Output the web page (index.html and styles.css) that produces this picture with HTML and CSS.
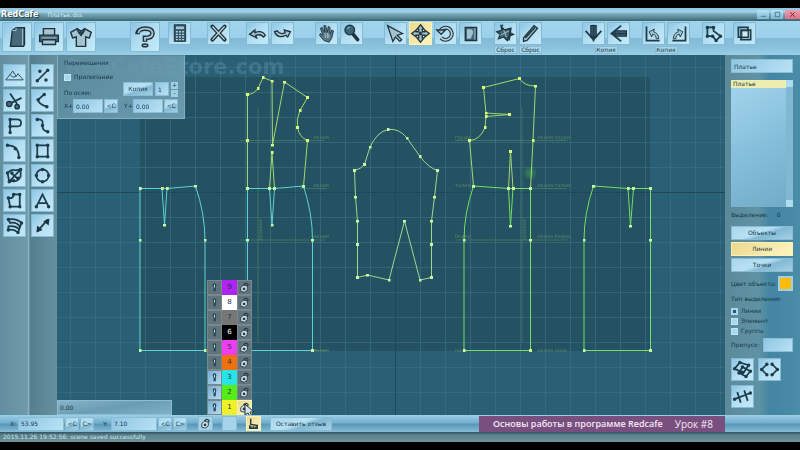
FILE: index.html
```html
<!DOCTYPE html>
<html lang="ru">
<head>
  <meta charset="UTF-8" />
  <meta name="viewport" content="width=device-width, initial-scale=1.0"/>
  <title>RedCafe - Платье.dss</title>
  <link rel="stylesheet" href="styles.css">
</head>
<body>
  <!-- shared symbols -->
  <svg class="defs" width="0" height="0" aria-hidden="true">
    <symbol id="bulb" viewBox="0 0 14 14">
      <path d="M7 2.500a2 2 0 0 1 2 2c0 1-.6 1.500-.6 2.500v4H6V7C6 6 5 5.500 5 4.500a2 2 0 0 1 2-2z" fill="#24465a"/>
      <path d="M7 4v3" stroke="#cfe6ee" stroke-width="1"/>
    </symbol>
    <symbol id="lock" viewBox="0 0 14 14">
      <path d="M3 7l3-2.500 4 1v4l-3 2.500-4-1z" fill="#dbe9ee" stroke="#253c48" stroke-width="1"/>
      <circle cx="6.500" cy="8.500" r="1.500" fill="#253c48"/>
      <path d="M6 4.500C7 2 10 2 11 4l-1 2" fill="none" stroke="#253c48" stroke-width="1.200"/>
    </symbol>
  </svg>

  <header class="titlebar">
    <h1>RedCafe</h1>
    <span class="filename">Платье.dss</span>
    <div class="window-buttons">
      <button aria-label="Свернуть"><svg viewBox="0 0 10 10"><path d="M2 7h6"/></svg></button>
      <button aria-label="Развернуть"><svg viewBox="0 0 10 10"><path d="M2.500 2.500h5v5h-5z"/></svg></button>
      <button class="close" aria-label="Закрыть"><svg viewBox="0 0 10 10"><path d="M2.500 2.500l5 5M7.500 2.500l-5 5"/></svg></button>
    </div>
  </header>

  <nav class="toolbar">
    <div class="group">
      <button class="tool big" aria-label="Новый"><svg viewBox="0 0 30 30"><path class="metal" d="M10 8l4-3h9v18l-1 2H8z"/><path class="thin" d="M10 8l4 0 0-3M21 6v18"/></svg></button>
      <button class="tool big" aria-label="Печать"><svg viewBox="0 0 30 30"><path class="pale" d="M9 6h12v8H9z"/><path class="metal" d="M5 13h20v7H5z"/><path class="pale" d="M8 18h14v5H8z"/><path class="thin" d="M7 16h16M11 9h8"/></svg></button>
      <button class="tool big" aria-label="Модель"><svg viewBox="0 0 30 30"><path class="pale" d="M11 6l4 3 4-3 7 4-2 6-4-1v10H10V15l-4 1-2-6z"/><path class="line" d="M15 9v5M11 7l3 5M19 7l-3 5"/><path class="thin" d="M12 15v9M18 15v9M7 12l3-2M23 12l-3-2"/></svg></button>
    </div>
    <div class="group sp-34">
      <button class="tool big" aria-label="Помощь"><svg viewBox="0 0 30 30"><path d="M7 12c0-4 4-6 8-6s8 1 8 5-4 5-8 5v4" fill="none" stroke="#20323c" stroke-width="5"/><path d="M8 11c0-3 3-5 7-5s8 1 8 5-4 5-8 5v3" fill="none" stroke="#a9c6d2" stroke-width="2"/><ellipse class="pale" cx="15" cy="24" rx="3" ry="1.500"/></svg></button>
    </div>
    <div class="group sp-8">
      <button class="tool" aria-label="Калькулятор"><svg viewBox="0 0 24 24"><path d="M6 2h13v19H6z" fill="#35586b" stroke="#172b36"/><path d="M8 4h9v3H8z" fill="#a5c9d8"/><path d="M8 10h9M8 13h9M8 16h9M8 19h9" stroke="#bcd9e5" stroke-width="1.600" stroke-dasharray="2 1.500"/></svg></button>
    </div>
    <div class="group sp-16">
      <button class="tool" aria-label="Удалить"><svg viewBox="0 0 24 24"><path d="M5 4l14 15M19 4L5 19" stroke="#20323c" stroke-width="4.500" stroke-linecap="round"/><path d="M5 4l14 15M19 4L5 19" stroke="#bcd3dc" stroke-width="1.500"/></svg></button>
    </div>
    <div class="group sp-16">
      <button class="tool" aria-label="Отменить"><svg viewBox="0 0 24 24"><path class="pale" d="M3 13l6-5v3c5-2 9-2 12 3l-2 2c-3-3-6-3-9-2l1 3z"/></svg></button>
      <button class="tool" aria-label="Вернуть"><svg viewBox="0 0 24 24"><path class="pale" d="M21 10l-7-2 1 3c-4 2-7 1-9-2l-3 1c2 6 7 7 13 4l2 2z"/></svg></button>
    </div>
    <div class="group sp-22">
      <button class="tool" aria-label="Рука"><svg viewBox="0 0 24 24"><path d="M9 20L4 14l1-2 3 2L5 6l2-1 3 6-1-8h2l2 8 1-7 2 1v8l2-5 2 1-2 8-3 5z" fill="#567784" stroke="#1d323d"/><path d="M10 11l1 6M13 11l0 6M15 12l-1 5" stroke="#c5dbe3" stroke-width=".8"/></svg></button>
      <button class="tool" aria-label="Лупа"><svg viewBox="0 0 24 24"><path class="heavy" d="M14 13l5 6"/><circle cx="10" cy="8" r="5.500" fill="#3d6575" stroke="#1d323d" stroke-width="1.500"/><path d="M7 7a3 3 0 0 1 3-2" class="thin"/></svg></button>
    </div>
    <div class="group sp-22">
      <button class="tool" aria-label="Выбор"><svg viewBox="0 0 24 24"><path class="pale" d="M3 3l17 9-6 2 5 5-2 2-5-5-3 5z"/></svg></button>
      <button class="tool on" aria-label="Перемещение"><svg viewBox="0 0 24 24"><path class="pale" d="M12 2l4 5h-2v3h3V8l5 4-5 4v-2h-3v3h2l-4 5-4-5h2v-3H7v2l-5-4 5-4v2h3V7H8z"/><circle cx="12" cy="12" r="2" fill="#253c48"/></svg></button>
      <button class="tool" aria-label="Поворот"><svg viewBox="0 0 24 24"><path d="M6 9a7 7 0 1 1 1 8" fill="none" stroke="#20323c" stroke-width="4.500"/><path d="M6 9a7 7 0 1 1 1 8" fill="none" stroke="#b5cfda" stroke-width="2"/><path class="pale" d="M2 8h10l-5 5z"/></svg></button>
      <button class="tool" aria-label="Отражение"><svg viewBox="0 0 24 24"><path class="metal" d="M6 5h13v15H6z"/><path d="M8 7h5c4 2 1 7-1 11H8z" fill="#9dc4d3"/><path class="thin" d="M17 6v13"/></svg></button>
    </div>
    <div class="group sp-12">
      <div class="stack">
        <button class="tool" aria-label="Центр"><svg viewBox="0 0 24 24"><path d="M7 4l4 4 7-2-1 5 4 2-5 2-2 5-4-4-6 2 2-5-4-3 6-2z" fill="#456572" stroke="#1d323d" stroke-width="1.500"/><path d="M6 14l10-5M10 8l3 8" class="thin"/><path class="line" d="M7 4l2-2M18 6l-2 14"/></svg></button>
        <button class="tiny">Сброс</button>
      </div>
      <div class="stack">
        <button class="tool" aria-label="Линейка"><svg viewBox="0 0 24 24"><path class="pale" d="M4 17L16 3l4 3L8 20l-4 1z"/><path class="line" d="M6 17L17 5"/></svg></button>
        <button class="tiny">Сброс</button>
      </div>
    </div>
    <div class="group sp-40">
      <div class="stack wide">
        <div class="group">
          <button class="tool" aria-label="Отразить вертикально"><svg viewBox="0 0 24 24"><path class="metal" d="M9 3h6v13H9z"/><path class="line" d="M3 9l9 10 9-10M12 2v19"/></svg></button>
          <button class="tool" aria-label="Отразить горизонтально"><svg viewBox="0 0 24 24"><path class="metal" d="M8 9h13v6H8z"/><path class="line" d="M15 3L4 12l11 9M3 12h18"/></svg></button>
        </div>
        <button class="tiny">Копия</button>
      </div>
    </div>
    <div class="group sp-12">
      <div class="stack wide">
        <div class="group">
          <button class="tool" aria-label="Повернуть влево"><svg viewBox="0 0 24 24"><path class="line" d="M4 4v16h15"/><path class="pale fine" d="M7 10l6-3-1 3c4 1 6 4 6 8h-3c0-3-1-5-4-5l-1 3z"/></svg></button>
          <button class="tool" aria-label="Повернуть вправо"><svg viewBox="0 0 24 24"><path class="line" d="M20 4v16H5"/><path class="pale fine" d="M17 10l-6-3 1 3c-4 1-6 4-6 8h3c0-3 1-5 4-5l1 3z"/></svg></button>
        </div>
        <button class="tiny">Копия</button>
      </div>
    </div>
    <div class="group sp-12">
      <button class="tool" aria-label="Контур"><svg viewBox="0 0 24 24"><path class="line" d="M5 5h7v4l8 6-5 5-4-5H5z"/><path class="dots" d="M5 5h0M12 5h0M20 15h0M15 20h0M5 15h0M11 15h0"/></svg></button>
    </div>
    <div class="group sp-8">
      <button class="tool" aria-label="Слои"><svg viewBox="0 0 24 24"><path d="M5 5h11v11H5zM8 8h11v11H8z" class="line"/><path d="M9 9h7v7H9z" fill="#cfe8f2" stroke="#1d323d"/></svg></button>
    </div>
  </nav>

  <main class="main">
    <aside class="tools">
      <button class="tool" aria-label="Рельеф"><svg viewBox="0 0 24 24"><path class="line fine" d="M2 17L10 7l4 6 2-3 6 7zM7 11l3 3 4-1"/></svg></button>
      <button class="tool" aria-label="Отрезок"><svg viewBox="0 0 24 24"><path class="line" d="M6 18L18 6"/><path class="dots" d="M6 18h0M18 6h0M9 7h0M16 17h0"/></svg></button>
      <button class="tool" aria-label="Ножницы"><svg viewBox="0 0 24 24"><path class="line" d="M7 4l8 12M20 9L8 15"/><circle class="metal" cx="6" cy="16" r="3"/><circle class="metal" cx="15" cy="19" r="2.500"/></svg></button>
      <button class="tool" aria-label="Дуга"><svg viewBox="0 0 24 24"><path class="line" d="M14 5l-7 6c0 4 4 6 10 8"/><path class="dots" d="M14 5h0M17 19h0M7 11h0"/></svg></button>
      <button class="tool" aria-label="Параллель"><svg viewBox="0 0 24 24"><path class="line" d="M7 20V5h8c6 0 6 8 0 8H7"/><path class="dots" d="M7 20h0M7 5h0M7 13h0"/></svg></button>
      <button class="tool" aria-label="Кривая"><svg viewBox="0 0 24 24"><path class="line" d="M6 5c8-1 6 5 6 8s2 5 6 6"/><path class="dots" d="M6 5h0M12 12h0M18 19h0"/></svg></button>
      <button class="tool" aria-label="Скругление"><svg viewBox="0 0 24 24"><path class="line" d="M4 6c9 0 13 5 13 14"/><path class="dots" d="M4 6h0M17 20h0M13 10h0"/></svg></button>
      <button class="tool" aria-label="Прямоугольник"><svg viewBox="0 0 24 24"><path class="line" d="M6 6h12v13H6z"/><path class="dots" d="M6 6h0M18 6h0M18 19h0M6 19h0"/></svg></button>
      <button class="tool" aria-label="Деталь"><svg viewBox="0 0 24 24"><path class="line" d="M4 9c3-3 6-4 9-3l6-1v8c-2 4-5 6-8 5l-5 1zM6 19L19 5M8 9l8 7"/><path class="dots" d="M4 9h0M19 5h0M11 18h0M6 19h0M9 9h0M16 15h0"/></svg></button>
      <button class="tool" aria-label="Окружность"><svg viewBox="0 0 24 24"><circle class="line" cx="12" cy="12" r="7"/><path class="dots" d="M12 5h0M12 19h0M5 12h0M19 12h0"/></svg></button>
      <button class="tool" aria-label="Фигура"><svg viewBox="0 0 24 24"><path class="line" d="M7 19L5 9c4 1 6-1 6-4h7v14z"/><path class="dots" d="M7 19h0M5 9h0M11 5h0M18 5h0M18 19h0"/></svg></button>
      <button class="tool" aria-label="Текст"><svg viewBox="0 0 24 24"><path class="line" d="M5 19l7-14 7 14M8 15h8"/><path class="dots" d="M5 19h0M19 19h0"/></svg></button>
      <button class="tool" aria-label="Сетка"><svg viewBox="0 0 24 24"><path class="line" d="M5 5c6-1 11 0 15 4l-4 11c-3-3-7-4-11-3v-4c5-1 9 0 12 3M5 5l2 4c4-1 8 0 11 4"/><path class="dots" d="M5 5h0M20 9h0M16 20h0M5 17h0"/></svg></button>
      <button class="tool" aria-label="Размер"><svg viewBox="0 0 24 24"><path class="line" d="M6 19L18 5"/><path d="M5 20l1-8 6 5zM20 4l-1 8-6-5z" fill="#1d323d"/></svg></button>
    </aside>

    <section class="workspace">
      <svg class="drawing" viewBox="57 55 668 360" preserveAspectRatio="xMinYMin slice">
        <defs>
          <pattern id="grid" x="20" y="17" width="25" height="25" patternUnits="userSpaceOnUse">
            <path d="M.5 0v25M0 .5h25" stroke="#3b7389" stroke-opacity=".6" fill="none"/>
          </pattern>
          <marker id="dot" markerWidth="3" markerHeight="3" refX="1.500" refY="1.500" markerUnits="userSpaceOnUse">
            <path d="M0 0h3v3H0z" fill="#c9f7a0"/>
          </marker>
          <marker id="ydot" markerWidth="3" markerHeight="3" refX="1.500" refY="1.500" markerUnits="userSpaceOnUse">
            <path d="M0 0h3v3H0z" fill="#d8fb7c"/>
          </marker>
          <filter id="soft"><feGaussianBlur stdDeviation="2"/></filter>
        </defs>
        <rect class="sheet" x="140" y="77" width="510" height="274"/>
        <rect x="57" y="55" width="668" height="360" fill="url(#grid)"/>
        <path class="axis" d="M57 192.500h668M395.500 55v360"/>

        <!-- guide lines -->
        <path class="guide" d="M240 140.500h85M240 240h85M455 140.500h112M455 240h112M300 188.500h27M300 350.500h27M530 188.500h37M258 108v234M522 107v235"/>
        <g class="mark">
          <text x="313" y="139">линия</text>
          <text x="313" y="187">линия</text>
          <text x="313" y="238">линия</text>
          <text x="313" y="352">линия</text>
          <text x="455" y="139">груди</text>
          <text x="455" y="187">талии</text>
          <text x="455" y="238">бедер</text>
          <text x="455" y="352">низа</text>
          <text x="537" y="139">линия груди</text>
          <text x="537" y="187">линия талии</text>
          <text x="537" y="238">линия бедер</text>
          <text x="537" y="352">линия низа</text>
          <text transform="translate(262 241) rotate(-90)">долевая</text>
          <text transform="translate(526 241) rotate(-90)">долевая</text>
        </g>
        <circle cx="530" cy="173" r="5" fill="#3fa04f" opacity=".6" filter="url(#soft)"/>

        <!-- back skirt -->
        <path class="cut cyan" d="M140 188.500H162L164.500 225 167 188.500 195.500 186Q205 214 205 240V350.500H140V240z"/>
        <path class="cut cyan" d="M162 188.500h5"/>
        <!-- back bodice -->
        <path class="cut lime" d="M247.500 188.500V140.500 94.500Q254 94 258 88.500L263 77.500 272 81 272.500 145 284.500 82 307.500 97.500 300 110.500Q296 119 297.500 127.500 299 137 307.500 140.500L303.500 186"/>
        <path class="cut lime" d="M269.500 188.500L272 152.500 274.500 188.500"/>
        <path class="cut cyan" d="M303.500 186Q312.500 214 312.500 240V350.500H247.500V240 188.500H269.500L272 225 274.500 188.500z"/>
        <path class="cut cyan" d="M269.500 188.500h5"/>
        <!-- sleeve -->
        <path class="cut pale-green" d="M354.500 170.500Q361 169 364.500 164.500L370 147Q377 132 388 129.500 399 128 407 138L420 156.500Q429 168 437.500 170.500L434.500 197 431.500 221V244.500 277.500L420 280 404.500 221 389 280 367.500 275 357.500 277.500V244.500 221L355.500 197z"/>
        <!-- front bodice -->
        <path class="cut lime" d="M530.500 188.500L533 140.500 535.500 86Q524 86 519.500 78.500L483.500 87.500 486 113 509.500 114.500 486 116.500 485 127.500Q480 140 469.500 140.500L473.500 186"/>
        <path class="cut lime" d="M508.500 188.500L510.500 151.500 513 188.500"/>
        <path class="cut green" d="M473.500 186Q464 214 464 240V350.500H530.500V240 188.500H513L510.500 226 508.500 188.500z"/>
        <path class="cut green" d="M508.500 188.500h5"/>
        <!-- front skirt -->
        <path class="cut green" d="M593.500 186Q584 214 584 240V350.500H650.500V240 188.500H633.500L630.500 226 628 188.500z"/>
        <path class="cut green" d="M628 188.500h5"/>
      </svg>

      <div class="watermark">RedCafeStore.com</div>
      <form class="options">
        <h2>Перемещения</h2>
        <label class="check"><input type="checkbox"> Прилипание</label>
        <div class="copy-row">
          <span>По осям:</span>
          <button type="button" class="btn">Копия</button>
          <input class="num" type="text" value="1" aria-label="Количество копий">
          <div class="spin">
            <button type="button" aria-label="Больше">+</button>
            <button type="button" aria-label="Меньше">-</button>
          </div>
        </div>
        <div class="axis-row">
          <label for="dx">X+</label><input id="dx" type="text" value="0.00"><button type="button" class="btn">&lt;C</button>
          <label for="dy">Y+</label><input id="dy" type="text" value="0.00"><button type="button" class="btn">&lt;C</button>
        </div>
      </form>

      <input class="length" type="text" value="0.00" aria-label="Длина">

      <div class="layers">
        <div class="layer"><button aria-label="Видимость 9"><svg><use href="#bulb"/></svg></button><span class="c9">9</span><button aria-label="Блокировка 9"><svg><use href="#lock"/></svg></button></div>
        <div class="layer"><button aria-label="Видимость 8"><svg><use href="#bulb"/></svg></button><span class="c8">8</span><button aria-label="Блокировка 8"><svg><use href="#lock"/></svg></button></div>
        <div class="layer"><button aria-label="Видимость 7"><svg><use href="#bulb"/></svg></button><span class="c7">7</span><button aria-label="Блокировка 7"><svg><use href="#lock"/></svg></button></div>
        <div class="layer"><button aria-label="Видимость 6"><svg><use href="#bulb"/></svg></button><span class="c6">6</span><button aria-label="Блокировка 6"><svg><use href="#lock"/></svg></button></div>
        <div class="layer"><button aria-label="Видимость 5"><svg><use href="#bulb"/></svg></button><span class="c5">5</span><button aria-label="Блокировка 5"><svg><use href="#lock"/></svg></button></div>
        <div class="layer"><button aria-label="Видимость 4"><svg><use href="#bulb"/></svg></button><span class="c4">4</span><button aria-label="Блокировка 4"><svg><use href="#lock"/></svg></button></div>
        <div class="layer"><button class="lit" aria-label="Видимость 3"><svg><use href="#bulb"/></svg></button><span class="c3">3</span><button aria-label="Блокировка 3"><svg><use href="#lock"/></svg></button></div>
        <div class="layer"><button class="lit" aria-label="Видимость 2"><svg><use href="#bulb"/></svg></button><span class="c2">2</span><button aria-label="Блокировка 2"><svg><use href="#lock"/></svg></button></div>
        <div class="layer"><button class="lit" aria-label="Видимость 1"><svg><use href="#bulb"/></svg></button><span class="c1">1</span><button class="on" aria-label="Блокировка 1"><svg><use href="#lock"/></svg></button></div>
        <svg class="pointer" viewBox="0 0 12 16"><path d="M1 1l9 8-4 0 2 4-2 1-2-4-3 2z" fill="#d5e3e8" stroke="#20323c" stroke-width="1"/></svg>
      </div>
    </section>

    <aside class="panel">
      <input type="text" value="Платье" aria-label="Модель">
      <div class="list">
        <ul>
          <li>Платье</li>
        </ul>
        <div class="scroll"><button aria-label="Вверх"></button><button aria-label="Вниз"></button></div>
      </div>
      <p class="count"><span>Выделение:</span> <span>0</span></p>
      <div class="modes">
        <button class="btn">Объекты</button>
        <button class="btn on">Линии</button>
        <button class="btn">Точки</button>
      </div>
      <div class="color-row"><label for="color">Цвет объекта:</label><button id="color" class="swatch" aria-label="Цвет объекта"></button></div>
      <fieldset>
        <legend>Тип выделения:</legend>
        <label class="check"><input type="checkbox" checked> Линии</label>
        <label class="check"><input type="checkbox"> Элемент</label>
        <label class="check"><input type="checkbox"> Группа</label>
      </fieldset>
      <div class="seam"><label for="seam">Припуск:</label><input id="seam" type="text"></div>
      <div class="seam-tools">
        <button class="tool" aria-label="Припуск внутрь"><svg viewBox="0 0 24 24"><path class="line" d="M3 11l6-7 10 3-6 9zM8 16l4-7 9 5-5 6z"/><path class="dots" d="M3 11h0M9 4h0M19 7h0M12 15h0M8 16h0M12 9h0M21 14h0M16 20h0"/></svg></button>
        <button class="tool" aria-label="Контур припуска"><svg viewBox="0 0 24 24"><path class="line" d="M9 6l-6 6 6 6M15 6l6 6-6 6"/><path class="dots" d="M9 6h0M15 6h0M9 18h0M15 18h0M3 12h0M21 12h0"/></svg></button>
        <button class="tool" aria-label="Пересечение"><svg viewBox="0 0 24 24"><path class="line" d="M6 7l4 12M14 5l4 12M3 15L21 8"/><path class="dots" d="M3 15h0M21 8h0"/></svg></button>
      </div>
    </aside>
  </main>

  <footer>
    <div class="coords">
      <label for="cx">X:</label><input id="cx" type="text" value="53.95"><button class="btn">&lt;C</button><button class="btn">C&gt;</button>
      <label for="cy">Y:</label><input id="cy" type="text" value="7.10"><button class="btn">&lt;C</button><button class="btn">C&gt;</button>
      <button class="slot" aria-label="Блокировка"><svg><use href="#lock"/></svg></button>
      <button class="slot" aria-label="Цвет слоя"></button>
      <button class="slot on" aria-label="Слой"><svg viewBox="0 0 14 14"><path d="M4 2v6l7 1v3H3V9" fill="none" stroke="#253c48" stroke-width="1.600"/><path d="M3 11h9" stroke="#253c48" stroke-width="2" stroke-dasharray="2 1"/></svg></button>
      <button class="btn feedback">Оставить отзыв</button>
      <div class="lesson"><strong>Основы работы в программе Redcafe</strong><span>Урок #8</span></div>
    </div>
    <div class="status">2015.11.26 19:52:56: scene saved successfully</div>
  </footer>
</body>
</html>
```
FILE: styles.css
```css
* {
  box-sizing: border-box;
}
body {
  margin: 0;
  padding: 8px 0;
  min-height: 100vh;
  display: flex;
  flex-direction: column;
  background: #000;
  color: #183646;
  font: 6px/8px "DejaVu Sans", sans-serif;
}
h1, h2, p, ul, fieldset {
  margin: 0;
  padding: 0;
  border: 0;
  list-style: none;
}
button, input {
  margin: 0;
  padding: 0;
  border: 0;
  font: inherit;
  color: inherit;
  min-width: 0;
}
input[type="text"] {
  height: 14px;
  padding: 0 2px;
  background: linear-gradient(135deg, #8fc6e4, #b9e2f4);
  border: 1px solid #8bbdd3;
}
input[type="checkbox"] {
  appearance: none;
  width: 7px;
  height: 7px;
  background: #a9d8ee;
  border: 1px solid #c3e6f3;
}
input[type="checkbox"]:checked {
  background: #285a75;
  border: 2px solid #a9d8ee;
}
svg {
  display: block;
}
.defs {
  position: absolute;
}

/* title bar */
.titlebar {
  display: flex;
  align-items: center;
  gap: 9px;
  height: 13px;
  padding-left: 1px;
  color: #d8ecf3;
  background: linear-gradient(#8dc4df, #a3d3e7 30%, #76a9bb 45%, #5b8996 75%, #386472);
}
.titlebar h1 {
  font-size: 8px;
  line-height: 11px;
  color: #fff;
  text-shadow: 1px 1px 1px #17303b;
}
.window-buttons {
  display: flex;
  gap: 2px;
  margin-left: auto;
}
.window-buttons button {
  width: 12px;
  height: 9px;
  background: linear-gradient(#b7e2f3, #80b7d0);
}
.window-buttons .close {
  width: 15px;
  background: linear-gradient(#e5a5b5, #df6f86);
}
.window-buttons svg {
  width: 9px;
  height: 9px;
  margin: 0 auto;
  fill: none;
  stroke: #3f7790;
}
.window-buttons .close svg {
  stroke: #7c1c30;
}

/* buttons */
.tool {
  width: 23px;
  height: 23px;
  background: linear-gradient(135deg, #8cc6e4, #b4dff3 50%, #c3e9f8);
  border: 1px solid #86b9d2;
}
.tool svg {
  width: 21px;
  height: 21px;
}
.tool.big {
  width: 30px;
  height: 30px;
}
.tool.big svg {
  width: 28px;
  height: 28px;
}
.tool.on, .btn.on, .slot.on, .layer .on {
  background: linear-gradient(135deg, #ecd98d, #fdf5c0);
  border-color: #fbf0b5;
}
.btn {
  height: 14px;
  background: linear-gradient(160deg, #a9d6ec, #b8e1f3 45%, #82b9d4 60%, #a5d2e8);
  border: 1px solid #8abbd2;
}
.line {
  fill: none;
  stroke: #1d3b49;
  stroke-width: 2;
}
.dots {
  stroke: #1d3b49;
  stroke-width: 4;
  stroke-linecap: round;
}
.heavy {
  stroke: #1d323d;
  stroke-width: 4;
  stroke-linecap: round;
}
.thin {
  fill: none;
  stroke: #a9c9d6;
  stroke-width: 1;
}
.pale {
  fill: #a3c2cf;
  stroke: #20323c;
  stroke-width: 1.5;
}
.metal {
  fill: #466979;
  stroke: #1d323d;
  stroke-width: 1.5;
}
.fine {
  stroke-width: 1;
}

.toolbar {
  display: flex;
  min-height: 34px;
  padding: 1px 2px 0;
  background: linear-gradient(#a1d5ed, #9bd0ea 50%, #83bad5 51%, #8bc3de 80%, #9acfe6);
}
.group {
  display: flex;
  align-items: flex-start;
  gap: 2px;
}
.sp-8 { margin-left: 8px; }
.sp-12 { margin-left: 12px; }
.sp-16 { margin-left: 16px; }
.sp-22 { margin-left: 21px; }
.sp-34 { margin-left: 34px; }
.sp-40 { margin-left: 40px; }
.stack {
  display: flex;
  flex-direction: column;
  align-items: center;
  gap: 1px;
}
.tiny {
  width: 23px;
  height: 8px;
  line-height: 6px;
  background: #a8d7ec;
  border: 1px solid #8bbcd3;
}

/* main area */
.main {
  flex: 1;
  display: flex;
}
.tools {
  display: grid;
  grid-template-columns: 23px 23px;
  align-content: start;
  gap: 2px 5px;
  padding: 9px 3px 0;
  background: linear-gradient(90deg, #628e9f, #6e9aaa 48%, #8db3bf 50%, #547f8f 53%, #67909f);
}
.workspace {
  position: relative;
  flex: 1;
  background: #2a6076;
  overflow: hidden;
}
.drawing {
  position: absolute;
  inset: 0;
  width: 100%;
  height: 100%;
}
.sheet {
  fill: #255262;
}
.axis {
  fill: none;
  stroke: #1e4858;
}
.guide {
  fill: none;
  stroke: #5c9169;
  stroke-opacity: 0.5;
}
.mark {
  fill: #6b9a6c;
  opacity: 0.7;
  font-size: 5px;
}
.cut {
  fill: none;
  stroke-width: 1;
  marker-start: url(#dot);
  marker-mid: url(#dot);
  marker-end: url(#dot);
}
.cyan { stroke: #5fd3d3; }
.lime {
  stroke: #a2d873;
  marker-start: url(#ydot);
  marker-mid: url(#ydot);
  marker-end: url(#ydot);
}
.pale-green { stroke: #9fd694; }
.green { stroke: #74de67; }

.watermark {
  position: absolute;
  top: 2px;
  left: 8px;
  font-size: 21px;
  line-height: 20px;
  font-weight: bold;
  color: rgba(143, 192, 208, 0.22);
}
.options {
  position: absolute;
  top: 0;
  left: 0;
  width: 128px;
  height: 64px;
  padding: 3px 6px;
  background: linear-gradient(135deg, rgba(99, 144, 162, 0.85), rgba(112, 162, 182, 0.9));
  border: 1px solid #83adbd;
  border-top-color: #5b8798;
}
.options h2 {
  font-size: 6px;
  font-weight: normal;
}
.check {
  display: flex;
  align-items: center;
  gap: 3px;
}
.options .check {
  margin-top: 6px;
}
.copy-row {
  display: flex;
  align-items: center;
  gap: 2px;
}
.copy-row span {
  margin: 8px auto 0 0;
}
.copy-row .btn {
  width: 30px;
}
.copy-row .num {
  width: 14px;
}
.spin {
  display: flex;
  flex-direction: column;
  gap: 1px;
}
.spin button {
  width: 7px;
  height: 7px;
  line-height: 6px;
  background: #9fcfe5;
}
.axis-row {
  display: flex;
  align-items: center;
  gap: 1px;
  margin-top: 2px;
}
.axis-row label {
  width: 8px;
}
.axis-row .btn + label {
  margin-left: 5px;
}
.axis-row input[type="text"] {
  width: 30px;
}
.axis-row .btn {
  width: 14px;
}
.workspace .length {
  position: absolute;
  left: 0;
  bottom: 0;
  width: 115px;
  height: 15px;
  background: linear-gradient(170deg, #85b3c7, #6b9db3 50%, #7fb0c6);
}

/* layer list */
.layers {
  position: absolute;
  left: 150px;
  bottom: 0;
  display: grid;
}
.layer {
  display: grid;
  grid-template-columns: repeat(3, 15px);
  height: 15px;
}
.layer button {
  background: #61747c;
  border: 1px solid #77888f;
}
.layer .lit {
  background: linear-gradient(135deg, #79add0, #b5dcf0);
}
.layer button svg {
  width: 13px;
  height: 13px;
}
.layer span {
  text-align: center;
  line-height: 15px;
  font-size: 7px;
}
.c9 { background: #b024f2; }
.c8 { background: #fff; }
.c7 { background: #777; }
.c6 { background: #000; color: #fff; }
.c5 { background: #ee3cf0; }
.c4 { background: #f0700f; }
.c3 { background: #27e4e8; }
.c2 { background: #55ec17; }
.c1 { background: #eef02a; }
.pointer {
  position: absolute;
  right: -4px;
  bottom: -4px;
  width: 12px;
  height: 16px;
}

/* right panel */
.panel {
  width: 75px;
  padding: 4px 7px 0 6px;
  display: flex;
  flex-direction: column;
  background: linear-gradient(90deg, #5b8a9a, #5f92a4 45%, #4385a2 60%, #4b8ca9);
}
.list {
  display: flex;
  height: 127px;
  margin-top: 7px;
  background: linear-gradient(150deg, #a4d6ed, #86bfdb 50%, #71aac6);
}
.list ul {
  flex: 1;
}
.list li {
  padding-left: 2px;
  background: #eceeb0;
}
.scroll {
  display: flex;
  flex-direction: column;
  justify-content: space-between;
  background: #80b7d2;
}
.scroll button {
  width: 7px;
  height: 7px;
  background: #addcf0;
}
.count {
  display: flex;
  gap: 8px;
  margin: 4px 0 7px;
}
.modes {
  display: grid;
  gap: 2px;
}
.color-row {
  display: flex;
  align-items: center;
  justify-content: space-between;
  margin: 4px 0;
  white-space: nowrap;
}
.swatch {
  width: 15px;
  height: 15px;
  background: #fdbb0a;
  border: 2px solid #a5cfe0;
  flex: none;
}
fieldset {
  display: grid;
  gap: 2px;
  min-width: 0;
}
legend {
  padding: 0 0 4px;
}
.seam {
  display: flex;
  align-items: center;
  justify-content: space-between;
  margin: 3px 0 6px;
}
.seam input[type="text"] {
  width: 30px;
}
.seam-tools {
  display: grid;
  grid-template-columns: 23px 23px;
  gap: 4px;
}

/* bottom */
.coords {
  display: flex;
  align-items: center;
  gap: 1px;
  height: 17px;
  padding-left: 10px;
  background: linear-gradient(#9cd0e6, #74afce 45%, #5a98b9 55%, #86bcd6);
}
.coords label {
  width: 7px;
}
.coords .btn + label {
  margin-left: 8px;
}
.coords input[type="text"] {
  width: 46px;
}
.coords .btn {
  width: 14px;
}
.coords .feedback {
  width: 62px;
  margin-left: 8px;
}
.slot {
  width: 15px;
  height: 15px;
  margin-left: 8px;
  background: #a5d4ea;
  border: 1px solid #8abbd2;
}
.btn + .slot {
  margin-left: 10px;
}
.slot svg {
  width: 13px;
  height: 13px;
}
.lesson {
  display: flex;
  align-items: center;
  gap: 12px;
  align-self: stretch;
  margin: 1px 75px 0 auto;
  padding: 0 12px 0 14px;
  background: #794f7f;
  color: #f4e8f6;
  font: 9px/16px "Open Sans", sans-serif;
}
.lesson strong {
  font-weight: 600;
}
.lesson span {
  font-size: 10px;
}
.status {
  height: 10px;
  padding-left: 3px;
  line-height: 9px;
  color: #d5e6ea;
  background: linear-gradient(#2f5361, #5a818c 30%, #6b939d);
}
```
